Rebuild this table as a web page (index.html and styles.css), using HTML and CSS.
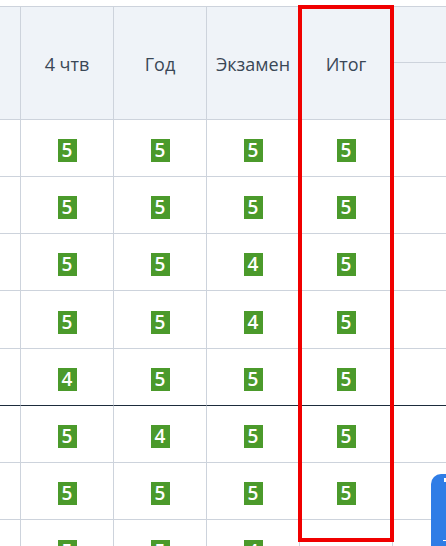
FILE: index.html
```html
<!DOCTYPE html>
<html lang="ru">
<head>
<meta charset="utf-8">
<link rel="stylesheet" href="styles.css">
</head>
<body>
<div class="grid">
  <div class="hc c0"></div>
  <div class="hc">4 чтв</div>
  <div class="hc">Год</div>
  <div class="hc">Экзамен</div>
  <div class="hc">Итог</div>
  <div class="hc last split"><div class="sub top"></div><div class="sub"></div></div>

  <div class="c c0"></div><div class="c"><span class="g">5</span></div><div class="c"><span class="g">5</span></div><div class="c"><span class="g">5</span></div><div class="c"><span class="g">5</span></div><div class="c last"></div>
  <div class="c c0"></div><div class="c"><span class="g">5</span></div><div class="c"><span class="g">5</span></div><div class="c"><span class="g">5</span></div><div class="c"><span class="g">5</span></div><div class="c last"></div>
  <div class="c c0"></div><div class="c"><span class="g">5</span></div><div class="c"><span class="g">5</span></div><div class="c"><span class="g">4</span></div><div class="c"><span class="g">5</span></div><div class="c last"></div>
  <div class="c c0"></div><div class="c"><span class="g">5</span></div><div class="c"><span class="g">5</span></div><div class="c"><span class="g">4</span></div><div class="c"><span class="g">5</span></div><div class="c last"></div>
  <div class="c c0 dark"></div><div class="c dark"><span class="g">4</span></div><div class="c dark"><span class="g">5</span></div><div class="c dark"><span class="g">5</span></div><div class="c dark"><span class="g">5</span></div><div class="c last dark"></div>
  <div class="c c0"></div><div class="c"><span class="g">5</span></div><div class="c"><span class="g">4</span></div><div class="c"><span class="g">5</span></div><div class="c"><span class="g">5</span></div><div class="c last"></div>
  <div class="c c0"></div><div class="c"><span class="g">5</span></div><div class="c"><span class="g">5</span></div><div class="c"><span class="g">5</span></div><div class="c"><span class="g">5</span></div><div class="c last"></div>
  <div class="c c0 end"></div><div class="c end"><span class="g">5</span></div><div class="c end"><span class="g">5</span></div><div class="c end"><span class="g">4</span></div><div class="c end"></div><div class="c last end"></div>
</div>
<div class="highlight"></div>
<div class="fab"><span class="fab-mark"></span><span class="fab-line"></span></div>
</body>
</html>
```

FILE: styles.css
```css
html, body {
  margin: 0;
  padding: 0;
  background: #ffffff;
  overflow: hidden;
  width: 446px;
  height: 546px;
}
body {
  padding-top: 6px;
  box-sizing: border-box;
  font-family: "Open Sans", "Noto Sans", sans-serif;
  position: relative;
}
.grid {
  display: grid;
  grid-template-columns: 21px repeat(4, 93px) minmax(0, 1fr);
  grid-template-rows: 113px repeat(3, 57px) 58px repeat(2, 57px) 57px 27px;
  border-top: 1px solid #cdd3dc;
  width: 446px;
  height: 540px;
  overflow: hidden;
}
.hc, .c {
  box-sizing: border-box;
  border-right: 1px solid #cdd3dc;
  border-bottom: 1px solid #cdd3dc;
  display: flex;
  align-items: center;
  justify-content: center;
}
.hc {
  background: #eff3f8;
  color: #3a4756;
  font-size: 18px;
  padding-top: 1px;
}
.c {
  padding-top: 5px;
}
.c.end {
  align-items: flex-start;
  padding-top: 20px;
  border-bottom: 0;
}
.c.dark {
  border-bottom-color: #1d2c3c;
}
.last {
  border-right: 0;
}
.hc.split {
  flex-direction: column;
  align-items: stretch;
  padding: 0;
}
.sub {
  flex: 1;
}
.sub.top {
  flex: 0 0 55px;
  border-bottom: 1px solid #cdd3dc;
}
.g {
  display: inline-block;
  width: 19px;
  height: 23px;
  line-height: 23px;
  text-align: center;
  background: #4b9a2b;
  color: #ffffff;
  font-size: 19px;
  font-weight: 600;
}
.highlight {
  position: absolute;
  left: 298px;
  top: 5px;
  width: 96px;
  height: 537px;
  box-sizing: border-box;
  border: 4px solid #f00000;
}
.fab {
  position: absolute;
  left: 431px;
  top: 474px;
  width: 15px;
  height: 72px;
  border-radius: 10px 0 0 0;
  background: #2f7de6;
}
.fab-mark {
  position: absolute;
  left: 13px;
  top: 4px;
  width: 2px;
  height: 4px;
  background: #ffffff;
}
.fab-line {
  position: absolute;
  left: 12px;
  top: 66px;
  width: 3px;
  height: 1px;
  background: #ffffff;
}
```
